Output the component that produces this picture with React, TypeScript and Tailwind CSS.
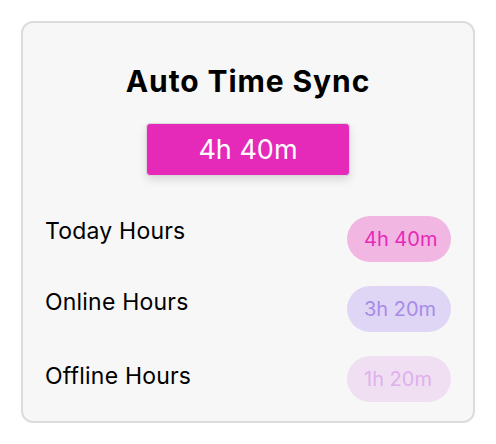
import React from "react";

const rows = [
  { label: "Today Hours", value: "4h 40m", pill: "bg-[#f2b6e3] text-[#e52ab8]", mt: "mt-[1px]" },
  { label: "Online Hours", value: "3h 20m", pill: "bg-[#dfd5f5] text-[#a88bea]", mt: "mt-[2px]" },
  { label: "Offline Hours", value: "1h 20m", pill: "bg-[#f0dff3] text-[#dfb0ec]", mt: "mt-[6px]" },
];

export default function App() {
  return (
    <div className="w-[496px] h-[444px] bg-white pt-[21px] pl-[21px]" style={{ fontFamily: "Inter, 'Noto Sans', sans-serif" }}>
      <div className="w-[454px] h-[402px] rounded-[12px] border-2 border-[#dcdcdc] bg-[#f7f7f7] px-[22px] pt-[40px] flex flex-col">
        <h1 className="text-center text-[30px] leading-[36px] font-bold text-black tracking-[0.9px]">Auto Time Sync</h1>
        <div className="mt-[24px] self-center w-[204px] h-[53px] rounded-[4px] border border-[#d9d9d9] bg-[#e52ab9] shadow-[0_4px_8px_rgba(0,0,0,0.12)] flex items-center justify-center text-white text-[27px] leading-none">
          4h 40m
        </div>
        <div className="mt-[40px] flex flex-col gap-[24px]">
          {rows.map((r) => (
            <div key={r.label} className="flex items-start justify-between">
              <div className={`${r.mt} text-[23px] leading-[28px] tracking-[0.2px] text-black whitespace-nowrap`}>{r.label}</div>
              <div className={`w-[104px] h-[46px] rounded-full pl-[17px] flex items-center text-[20px] leading-none whitespace-nowrap ${r.pill}`}>
                {r.value}
              </div>
            </div>
          ))}
        </div>
      </div>
    </div>
  );
}
